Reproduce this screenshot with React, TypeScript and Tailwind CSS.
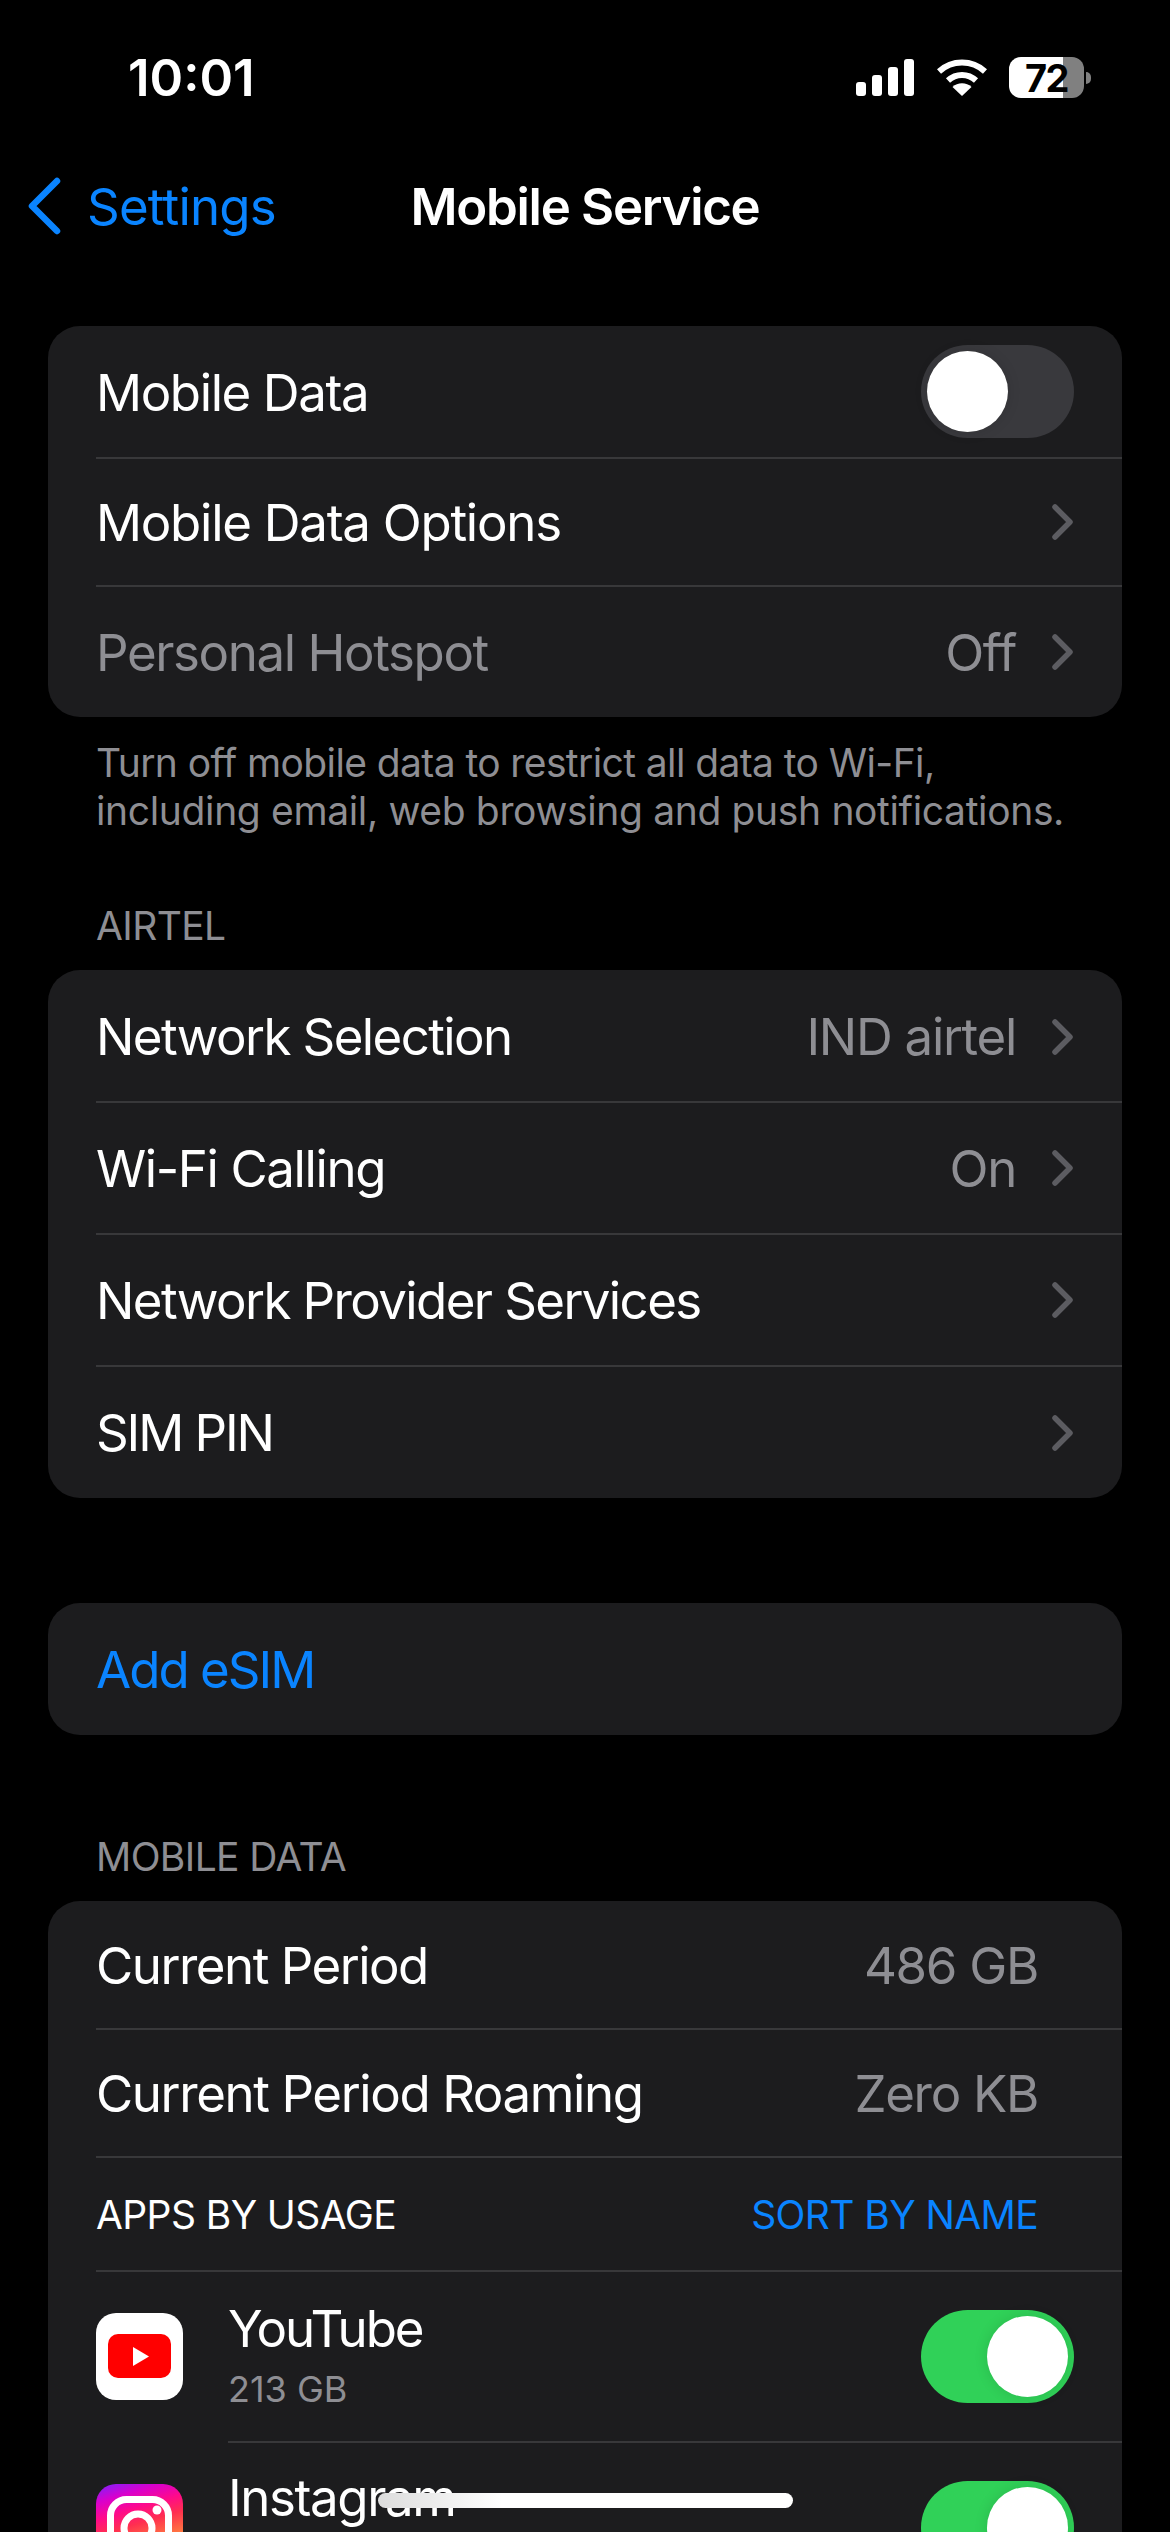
const sans = "font-['Inter',sans-serif]";

function Chevron() {
  return (
    <svg width="23" height="38" viewBox="0 0 23 38" className="shrink-0" fill="none">
      <path d="M4 4l15 15L4 34" stroke="#5c5c61" strokeWidth="5.5" strokeLinecap="round" strokeLinejoin="round" />
    </svg>
  );
}

function Toggle({ on, className = '' }: { on: boolean; className?: string }) {
  return (
    <div className={`flex h-[93px] w-[153px] shrink-0 items-center rounded-full px-[6px] ${on ? 'justify-end bg-[#30d158]' : 'justify-start bg-[#39393d]'} ${className}`}>
      <div className="h-[81px] w-[81px] rounded-full bg-white shadow-[0_0_14px_rgba(0,0,0,0.12)]" />
    </div>
  );
}

function Row({
  label,
  value,
  chevron = true,
  dim = false,
  height,
  track = 'tracking-[-1.4px]',
}: {
  label: string;
  value?: string;
  chevron?: boolean;
  dim?: boolean;
  height: string;
  track?: string;
}) {
  return (
    <div className={`flex items-center justify-between pl-[48px] ${height}`}>
      <span className={`text-[51px] leading-none ${track} ${dim ? 'text-[#8e8e93]' : 'text-white'}`}>{label}</span>
      <div className="flex items-center gap-[35px]">
        {value && <span className="text-[51px] leading-none tracking-[-1.3px] text-[#8e8e93]">{value}</span>}
        {chevron && <Chevron />}
      </div>
    </div>
  );
}

function Sep({ inset = 'ml-[48px]' }: { inset?: string }) {
  return <div className={`h-[2px] bg-[#38383a] ${inset}`} />;
}

export default function App() {
  return (
    <div className={`relative h-[2532px] w-[1170px] overflow-hidden bg-black ${sans}`}>
      {/* status bar */}
      <div className="flex h-[155px] items-center justify-between pl-[128px] pr-[79px]">
        <span className="text-[51px] font-semibold leading-none tracking-[0px] text-white">10:01</span>
        <div className="flex items-center">
          <svg width="58" height="37" viewBox="0 0 58 37" fill="white">
            <rect x="0" y="23" width="10" height="14" rx="3" />
            <rect x="16" y="16" width="10" height="21" rx="3" />
            <rect x="32" y="8" width="10" height="29" rx="3" />
            <rect x="48" y="0" width="10" height="37" rx="3" />
          </svg>
          <svg width="50" height="37" viewBox="0 0 50 37" fill="none" className="ml-[23px]">
            <path d="M2 12.5C15 0.5 35 0.5 48 12.5" stroke="white" strokeWidth="6" />
            <path d="M11 21.5C19 14 31 14 39 21.5" stroke="white" strokeWidth="6" />
            <path d="M25 37L15.5 28C20.5 23 29.5 23 34.5 28Z" fill="white" />
          </svg>
          <div className="ml-[22px] flex items-center gap-[2px]">
            <div className="flex h-[41px] w-[75px] items-center justify-center rounded-[12px] bg-[linear-gradient(to_right,#ffffff_54px,#808080_54px)]">
              <span className="text-[38px] font-bold leading-none tracking-[-1.5px] text-black">72</span>
            </div>
            <div className="h-[12px] w-[5px] rounded-r-full bg-[#808080]" />
          </div>
        </div>
      </div>

      {/* nav bar */}
      <div className="relative flex h-[102px] items-center justify-center">
        <div className="absolute left-[27px] top-0 flex h-full items-center gap-[24px]">
          <svg width="36" height="60" viewBox="0 0 36 60" fill="none">
            <path d="M30 5L5 30l25 25" stroke="#0a84ff" strokeWidth="6.5" strokeLinecap="round" strokeLinejoin="round" />
          </svg>
          <span className="text-[51px] leading-none tracking-[-0.8px] text-[#0a84ff]">Settings</span>
        </div>
        <span className="text-[51px] font-semibold leading-none tracking-[-1.3px] text-white">Mobile Service</span>
      </div>

      {/* mobile data toggle card */}
      <div className="mx-[48px] mt-[69px] overflow-hidden rounded-[32px] bg-[#1c1c1e]">
        <div className="flex h-[131px] items-center justify-between pl-[48px] pr-[48px]">
          <span className="pt-[2px] text-[51px] leading-none tracking-[-1.4px] text-white">Mobile Data</span>
          <Toggle on={false} />
        </div>
        <Sep />
        <Row label="Mobile Data Options" height="h-[126px] pr-[48px]" track="tracking-[-1.27px]" />
        <Sep />
        <Row label="Personal Hotspot" value="Off" dim height="h-[130px] pr-[48px]" />
      </div>

      <p className="mt-[22px] px-[96px] text-[39px] leading-[48px] text-[#8e8e93]">
        <span className="tracking-[-0.6px]">Turn off mobile data to restrict all data to Wi-Fi,</span>
        <br />
        <span className="tracking-[-0.35px]">including email, web browsing and push notifications.</span>
      </p>

      <div className="mt-[67px] px-[96px] text-[39px] leading-[47px] tracking-[-0.6px] text-[#8e8e93]">AIRTEL</div>

      <div className="mx-[48px] mt-[21px] overflow-hidden rounded-[32px] bg-[#1c1c1e]">
        <Row label="Network Selection" value="IND airtel" height="h-[131px] pt-[2px] pr-[48px]" track="tracking-[-1.6px]" />
        <Sep />
        <Row label="Wi-Fi Calling" value="On" height="h-[130px] pr-[48px]" />
        <Sep />
        <Row label="Network Provider Services" height="h-[130px] pr-[48px]" track="tracking-[-1.6px]" />
        <Sep />
        <Row label="SIM PIN" height="h-[131px] pr-[48px]" track="tracking-[-2.1px]" />
      </div>

      <div className="mx-[48px] mt-[105px] flex h-[132px] items-center rounded-[32px] bg-[#1c1c1e] pl-[48px]">
        <span className="text-[51px] leading-none tracking-[-2px] text-[#0a84ff]">Add eSIM</span>
      </div>

      <div className="mt-[98px] px-[96px] text-[39px] leading-[47px] tracking-[-0.6px] text-[#8e8e93]">MOBILE DATA</div>

      <div className="mx-[48px] mt-[21px] rounded-[32px] bg-[#1c1c1e]">
        <Row label="Current Period" value="486 GB" chevron={false} height="h-[127px] pt-[2px] pr-[84px]" track="tracking-[-1.5px]" />
        <Sep />
        <Row label="Current Period Roaming" value="Zero KB" chevron={false} height="h-[126px] pr-[84px]" />
        <Sep />
        <div className="flex h-[112px] items-center justify-between pl-[48px] pr-[84px]">
          <span className="text-[39px] leading-none tracking-[-0.6px] text-white">APPS BY USAGE</span>
          <span className="text-[39px] leading-none tracking-[-0.6px] text-[#0a84ff]">SORT BY NAME</span>
        </div>
        <Sep />
        <div className="flex h-[169px] items-center px-[48px]">
          <svg width="87" height="87" viewBox="0 0 87 87" className="shrink-0">
            <rect width="87" height="87" rx="20" fill="white" />
            <rect x="12" y="21" width="63" height="44" rx="10" fill="#ff0000" />
            <path d="M37 34l16 9.5L37 53z" fill="white" />
          </svg>
          <div className="ml-[45px] flex flex-1 flex-col pb-[4px]">
            <span className="text-[51px] leading-[58px] tracking-[-2.1px] text-white">YouTube</span>
            <span className="mt-[10px] text-[36px] leading-[42px] tracking-[0px] text-[#8e8e93]">213 GB</span>
          </div>
          <Toggle on />
        </div>
        <Sep inset="ml-[180px]" />
        <div className="flex items-start px-[48px] pt-[26px]">
          <svg width="87" height="87" viewBox="0 0 87 87" className="mt-[15px] shrink-0">
            <defs>
              <linearGradient id="ig" x1="0" y1="0" x2="0.3" y2="1">
                <stop offset="0" stopColor="#7a22ff" />
                <stop offset="0.2" stopColor="#d900cc" />
                <stop offset="0.38" stopColor="#ff0a8a" />
                <stop offset="0.55" stopColor="#ff2f50" />
                <stop offset="1" stopColor="#ffc030" />
              </linearGradient>
            </defs>
            <rect width="87" height="87" rx="20" fill="url(#ig)" />
            <rect x="14.5" y="15.5" width="58" height="58" rx="16" fill="none" stroke="white" strokeWidth="7" />
            <circle cx="42" cy="44" r="14" fill="none" stroke="white" strokeWidth="7" />
            <circle cx="61" cy="26" r="4.5" fill="white" />
          </svg>
          <div className="ml-[45px] flex-1">
            <span className="text-[51px] leading-[58px] tracking-[-1.4px] text-white">Instagram</span>
          </div>
          <Toggle on className="mt-[12px]" />
        </div>
      </div>

      {/* home indicator */}
      <div className="absolute left-[378px] top-[2493px] h-[15px] w-[415px] rounded-full bg-[linear-gradient(to_right,#dcdcdc,#ffffff_30%)]" />
    </div>
  );
}
